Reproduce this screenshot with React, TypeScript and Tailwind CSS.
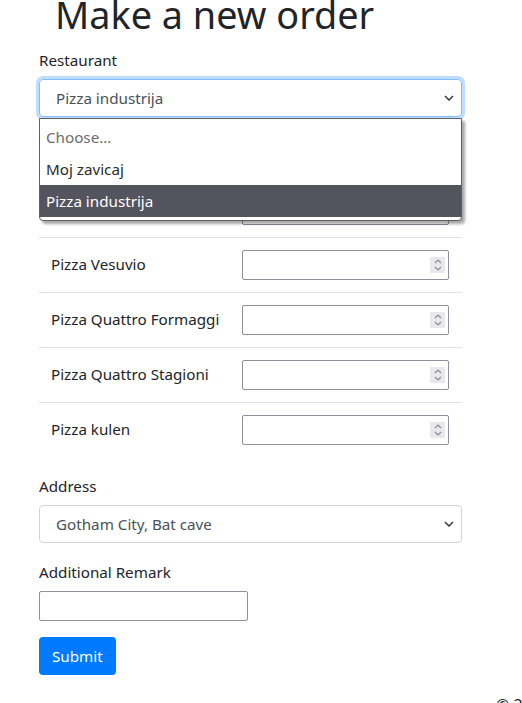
import React from "react";

const FONT = { fontFamily: '"Noto Sans", "Open Sans", sans-serif' };

const pizzas = [
  "Pizza Margherita",
  "Pizza Capricciosa",
  "Pizza Vesuvio",
  "Pizza Quattro Formaggi",
  "Pizza Quattro Stagioni",
  "Pizza kulen",
];

function Chevron() {
  return (
    <svg width="10" height="6" viewBox="0 0 10 6" className="absolute right-[7px] top-1/2 -translate-y-1/2">
      <path d="M1 1l4 4 4-4" fill="none" stroke="#343a40" strokeWidth="1.5" />
    </svg>
  );
}

function NumberBox() {
  return (
    <div className="relative h-[30px] w-[207px] rounded-[2px] border border-[#8f8f9d] bg-white">
      <div className="absolute right-[3px] top-[6px] flex h-[16px] w-[15px] flex-col items-center justify-center gap-[2px] bg-[#e9e9ed]">
        <svg width="8" height="5" viewBox="0 0 8 5">
          <path d="M1 4l3-3 3 3" fill="none" stroke="#8a8a96" strokeWidth="1.2" />
        </svg>
        <svg width="8" height="5" viewBox="0 0 8 5">
          <path d="M1 1l3 3 3-3" fill="none" stroke="#8a8a96" strokeWidth="1.2" />
        </svg>
      </div>
    </div>
  );
}

export default function App() {
  return (
    <div className="relative h-[703px] w-[522px] overflow-hidden bg-white text-[15.2px] text-[#212529]" style={FONT}>
      <div className="w-[423px] ml-[39px]">
        {/* HEADER */}
        <h1 className="-mt-[9px] mb-[8px] ml-[16px] text-[37.8px] leading-[48px] font-normal">Make a new order</h1>

        {/* RESTAURANT */}
        <div className="relative mb-[10px]">
          <label className="mb-[8px] block pt-[2px] leading-[22px]">Restaurant</label>
          <div className="relative flex h-[38px] items-center rounded-[4px] border border-[#80bdff] pl-[16px] text-[#495057] shadow-[0_0_0_3px_rgba(0,123,255,0.25)]">
            Pizza industrija
            <Chevron />
          </div>

          {/* open list */}
          <div className="absolute left-0 right-0 top-[71px] z-10 rounded-b-[4px] border border-[#5f5f5f] bg-white pb-[3px] pt-[2px] shadow-[3px_3px_3px_rgba(0,0,0,0.35)]">
            <div className="flex h-[32px] items-center pl-[6px] text-[#6c6c6c]">Choose...</div>
            <div className="flex h-[32px] items-center pl-[6px] text-[#2b2b2b]">Moj zavicaj</div>
            <div className="flex h-[32px] items-center bg-[#54545e] pl-[6px] text-white">Pizza industrija</div>
          </div>
        </div>

        {/* PIZZAS */}
        <div className="mb-[16px]">
          {pizzas.map((p) => (
            <div key={p} className="flex h-[55px] items-center border-t border-[#dee2e6]">
              <div className="w-[191px] pl-[12px] pb-[2px]">{p}</div>
              <div className="pl-[12px]">
                <NumberBox />
              </div>
            </div>
          ))}
        </div>

        {/* ADDRESS */}
        <div className="mb-[16px]">
          <label className="mb-[8px] mt-[1px] block pt-[2px] leading-[22px]">Address</label>
          <div className="relative flex h-[38px] items-center rounded-[4px] border border-[#ced4da] pl-[16px] text-[#495057]">
            Gotham City, Bat cave
            <Chevron />
          </div>
        </div>

        {/* REMARK */}
        <div className="mb-[16px]">
          <label className="mb-[8px] block pt-[2px] leading-[22px]">Additional Remark</label>
          <div className="h-[30px] w-[209px] rounded-[2px] border border-[#8f8f9d] bg-white" />
        </div>

        <button className="h-[38px] rounded-[4px] bg-[#007bff] px-[13px] text-white">Submit</button>
      </div>

      <div className="absolute left-[496px] top-[693px] whitespace-nowrap text-[16px] text-[#212529]">© 2020 - Pizza</div>
    </div>
  );
}
